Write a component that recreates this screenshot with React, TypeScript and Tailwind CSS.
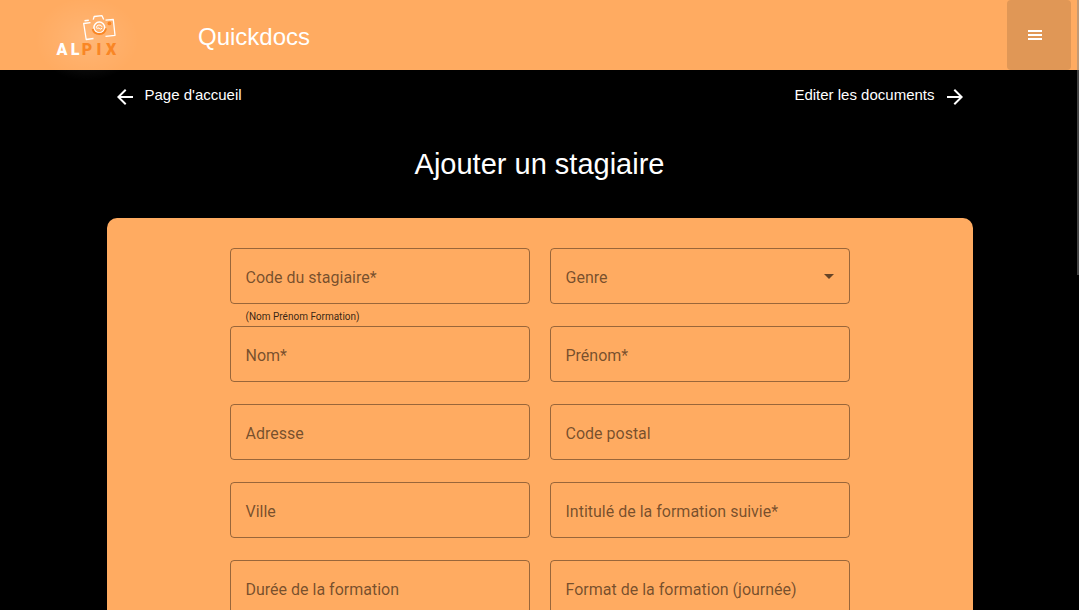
import { useId } from "react";

type FieldProps = {
  label: string;
  hint?: string;
  options?: string[];
};

const fields: FieldProps[] = [
  { label: "Code du stagiaire*", hint: "(Nom Prénom Formation)" },
  { label: "Genre", options: ["Femme", "Homme"] },
  { label: "Nom*" },
  { label: "Prénom*" },
  { label: "Adresse" },
  { label: "Code postal" },
  { label: "Ville" },
  { label: "Intitulé de la formation suivie*" },
  { label: "Durée de la formation" },
  { label: "Format de la formation (journée)" },
];

const controlClass =
  "peer col-start-1 row-start-1 h-14 w-full appearance-none rounded border border-black/40 bg-transparent px-4 text-base text-black/80 outline-none focus:border-black";

function Field({ label, hint, options }: FieldProps) {
  const id = useId();
  return (
    <div>
      <div className="grid items-center">
        {options ? (
          <select id={id} required defaultValue="" className={controlClass}>
            <option value="" disabled hidden />
            {options.map((option) => (
              <option key={option}>{option}</option>
            ))}
          </select>
        ) : (
          <input id={id} type="text" placeholder=" " className={controlClass} />
        )}
        <label
          htmlFor={id}
          className={
            options
              ? "pointer-events-none col-start-1 row-start-1 px-4 pt-1 text-base text-black/55 peer-valid:self-start peer-valid:text-xs"
              : "pointer-events-none col-start-1 row-start-1 px-4 pt-1 text-base text-black/55 peer-focus:self-start peer-focus:text-xs peer-[:not(:placeholder-shown)]:self-start peer-[:not(:placeholder-shown)]:text-xs"
          }
        >
          {label}
        </label>
        {options && (
          <svg
            viewBox="0 0 10 5"
            className="pointer-events-none col-start-1 row-start-1 mr-4 h-[5px] w-[10px] justify-self-end fill-black/60"
            aria-hidden="true"
          >
            <path d="M0 0h10L5 5z" />
          </svg>
        )}
      </div>
      <p className="h-[22px] px-4 pt-1 text-[10px] leading-[18px] text-black/80">{hint}</p>
    </div>
  );
}

function Logo() {
  return (
    <svg
      viewBox="0 0 80 60"
      className="h-[60px] w-20 overflow-visible"
      role="img"
      aria-label="Alpix"
    >
      <defs>
        <radialGradient id="halo">
          <stop offset="0" stopColor="#fff" stopOpacity="0.14" />
          <stop offset="0.6" stopColor="#fff" stopOpacity="0.05" />
          <stop offset="1" stopColor="#fff" stopOpacity="0" />
        </radialGradient>
      </defs>
      <ellipse cx="47" cy="34" rx="52" ry="42" fill="url(#halo)" />
      <g transform="translate(7 0)">
        <g fill="none" stroke="#fff" strokeWidth="1.3" strokeLinejoin="round">
          <path d="M46.5 33.5 39.2 34.5 36.7 18.5 43.5 17.6" />
          <path d="M46.2 14.6 47.2 11.5 55 10.7 56.7 14.6" />
          <path d="M58.5 15.2 66.3 14.5 68 30.3 58.5 31.4" />
          <path d="M37.5 15.8 41.8 15.2" strokeWidth="1.6" />
          <circle cx="52.3" cy="22.5" r="5.4" strokeWidth="1.5" />
          <path d="M49.3 22.8a3 3 0 0 1 5.8-.9M49.5 24.2q1.2-2.4 2.7-.8t3-.4" strokeWidth="1" />
        </g>
        <path
          d="M45.6 24a6.9 6.9 0 0 0 13.4-.6"
          fill="none"
          stroke="#f98625"
          strokeWidth="2"
        />
        <circle cx="62.4" cy="18.4" r="1.9" fill="#f98625" />
      </g>
      <g className="font-[Roboto,sans-serif] text-[16px] font-black" textAnchor="middle">
        <text x="22 35" y="50" fill="#fff">
          AL
        </text>
        <text x="47 59 71" y="50" fill="#f98625">
          PIX
        </text>
      </g>
    </svg>
  );
}

const linkClass = "flex items-center text-[15px] leading-5 text-white";

export default function App() {
  return (
    <div className="h-screen overflow-y-auto bg-black font-['Liberation_Sans',Arial,sans-serif] [scrollbar-width:none]">
      <header className="flex h-[70px] items-center bg-[#ffab61] pr-2 pl-10">
        <a href="#accueil" className="relative">
          <Logo />
        </a>
        <span className="ml-[78px] pt-1 text-2xl text-white">Quickdocs</span>
        <button
          type="button"
          aria-label="Menu"
          className="ml-auto flex h-full w-16 items-center justify-center rounded bg-[#e09756] pr-2"
        >
          <svg viewBox="0 0 14 10" className="h-[10px] w-[14px] fill-white" aria-hidden="true">
            <path d="M0 0h14v2H0zM0 4h14v2H0zM0 8h14v2H0z" />
          </svg>
        </button>
      </header>

      <main className="mx-auto w-full max-w-[866px]">
        <nav className="flex justify-between px-1.5 pt-[15px]">
          <a href="#accueil" className={linkClass}>
            <svg viewBox="0 0 24 24" className="mr-2 size-6 fill-white" aria-hidden="true">
              <path d="M20 11H7.83l5.59-5.59L12 4l-8 8 8 8 1.41-1.41L7.83 13H20v-2z" />
            </svg>
            <span className="pb-1">Page d'accueil</span>
          </a>
          <a href="#documents" className={linkClass}>
            <span className="pb-1">Editer les documents</span>
            <svg viewBox="0 0 24 24" className="ml-2 size-6 fill-white" aria-hidden="true">
              <path d="M12 4l-1.41 1.41L16.17 11H4v2h12.17l-5.58 5.59L12 20l8-8z" />
            </svg>
          </a>
        </nav>

        <h1 className="mt-[37px] text-center text-[29px] leading-9 text-white">
          Ajouter un stagiaire
        </h1>

        <form className="mt-9 flex justify-center rounded-[10px] bg-[#ffab61] px-5 py-[30px] font-[Roboto,sans-serif]">
          <div className="grid w-full max-w-[620px] grid-cols-2 gap-x-5">
            {fields.map((field) => (
              <Field key={field.label} {...field} />
            ))}
          </div>
        </form>
      </main>

      <div
        className="pointer-events-none fixed top-0 right-0 h-[45%] w-0.5 bg-[#888888]/50"
        aria-hidden="true"
      />
    </div>
  );
}
